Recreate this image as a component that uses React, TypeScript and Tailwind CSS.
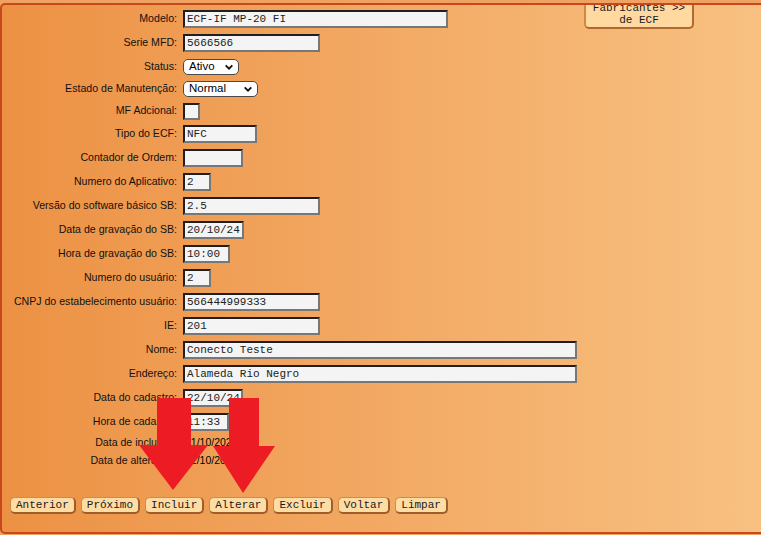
import React from "react";

const mono = "font-['Liberation_Mono','Courier_New',monospace]";

type Row =
  | { label: string; kind: "input"; value: string; w: string }
  | { label: string; kind: "select"; value: string; w: string; h: string }
  | { label: string; kind: "check" }
  | { label: string; kind: "text"; value: string };

const rows: Row[] = [
  { label: "Modelo:", kind: "input", value: "ECF-IF MP-20 FI", w: "w-[265px]" },
  { label: "Serie MFD:", kind: "input", value: "5666566", w: "w-[137px]" },
  { label: "Status:", kind: "select", value: "Ativo", w: "w-[56px]", h: "h-[23px]" },
  { label: "Estado de Manutenção:", kind: "select", value: "Normal", w: "w-[75px]", h: "h-[22px]" },
  { label: "MF Adcional:", kind: "check" },
  { label: "Tipo do ECF:", kind: "input", value: "NFC", w: "w-[74px]" },
  { label: "Contador de Ordem:", kind: "input", value: "", w: "w-[60px]" },
  { label: "Numero do Aplicativo:", kind: "input", value: "2", w: "w-[28px]" },
  { label: "Versão do software básico SB:", kind: "input", value: "2.5", w: "w-[137px]" },
  { label: "Data de gravação do SB:", kind: "input", value: "20/10/24", w: "w-[61px]" },
  { label: "Hora de gravação do SB:", kind: "input", value: "10:00", w: "w-[47px]" },
  { label: "Numero do usuário:", kind: "input", value: "2", w: "w-[28px]" },
  { label: "CNPJ do estabelecimento usuário:", kind: "input", value: "566444999333", w: "w-[137px]" },
  { label: "IE:", kind: "input", value: "201", w: "w-[137px]" },
  { label: "Nome:", kind: "input", value: "Conecto Teste", w: "w-[394px]" },
  { label: "Endereço:", kind: "input", value: "Alameda Rio Negro", w: "w-[394px]" },
  { label: "Data do cadastro:", kind: "input", value: "22/10/24", w: "w-[60px]" },
  { label: "Hora de cadastro:", kind: "input", value: "11:33", w: "w-[46px]" },
  { label: "Data de inclusão:", kind: "text", value: "01/10/2024" },
  { label: "Data de alteração:", kind: "text", value: "22/10/2024" },
];

const actions = ["Anterior", "Próximo", "Incluir", "Alterar", "Excluir", "Voltar", "Limpar"];

const inset =
  "border-2 border-t-[#1f1f1f] border-l-[#1f1f1f] border-r-[#777] border-b-[#777] bg-[#f4f4f4]";

const Control: React.FC<{ row: Row }> = ({ row }) => {
  if (row.kind === "input") {
    return (
      <input
        readOnly
        value={row.value}
        className={`h-[18px] ${row.w} ${inset} px-[2px] text-[11px] leading-none text-[#222] outline-none ${mono}`}
      />
    );
  }
  if (row.kind === "select") {
    return (
      <div
        role="combobox"
        className={`flex h-[16px] ${row.w} items-center justify-between rounded-[5px] border border-[#4a4a4a] bg-white pl-[5px] pr-[4px] text-[11.5px] leading-none text-black`}
      >
        <span>{row.value}</span>
        <svg viewBox="0 0 12 12" className="h-[10px] w-[10px]">
          <path d="M2 4 L6 8 L10 4" fill="none" stroke="#111" strokeWidth="2.2" />
        </svg>
      </div>
    );
  }
  if (row.kind === "check") {
    return <div className={`h-[17px] w-[17px] ${inset}`} />;
  }
  return <span className="pl-[2px] text-[10.5px] text-black">{row.value}</span>;
};

const rowHeight = (row: Row) => {
  if (row.kind === "select") return row.h;
  if (row.kind === "check") return "h-[22px]";
  if (row.kind === "text") return "h-[18px]";
  return "h-[24px]";
};

export default function App() {
  return (
    <div className="relative h-[535px] w-[761px] overflow-hidden bg-[#f0a262] pt-[3px] font-['Liberation_Sans',Arial,sans-serif]">
      <div className="h-[531px] w-[800px] overflow-hidden rounded-[5px] border-2 border-[#c8471c] bg-linear-to-r from-[#ec9143] to-[#f8c384]">
        <div className="flex items-start pt-[2px]">
          <div className="flex w-[575px] flex-col">
            {rows.map((row) => (
              <div key={row.label} className={`flex items-center ${rowHeight(row)}`}>
                <span className="w-[175px] shrink-0 text-right text-[10.6px] text-[#111]">
                  {row.label}
                </span>
                <div className="ml-[6px] flex items-center">
                  <Control row={row} />
                </div>
              </div>
            ))}
          </div>
          <button
            className={`-mt-[8px] ml-[7px] w-[110px] rounded-b-[5px] border-2 border-[#d08844] border-b-[#b06a30] border-r-[#b06a30] bg-[#ffd9a0] pb-[1px] pt-[1px] text-[11px] leading-[12px] text-[#1a1a1a] ${mono}`}
          >
            Fabricantes &gt;&gt;
            <br />
            de ECF
          </button>
        </div>

        <div className="mt-[27px] flex gap-[5px] pl-[8px]">
          {actions.map((a) => (
            <button
              key={a}
              className={`rounded-[5px] border border-[#d08a4a] border-b-2 border-r-2 border-b-[#9c5e2a] border-r-[#9c5e2a] bg-[#ffdca4] px-[5px] py-[1px] text-[11px] leading-[12px] text-[#1a1a1a] ${mono}`}
            >
              {a}
            </button>
          ))}
        </div>
      </div>

      {/* two callout arrows over the action bar */}
      <svg className="pointer-events-none absolute left-0 top-0" width="761" height="535">
        <polygon
          points="157,398 191,398 191,445 208,445 173,490 139,445 157,445"
          fill="#ed1c24"
        />
        <polygon
          points="229,398 259,398 259,446 275,446 243,493 213,446 229,446"
          fill="#ed1c24"
        />
      </svg>
    </div>
  );
}
